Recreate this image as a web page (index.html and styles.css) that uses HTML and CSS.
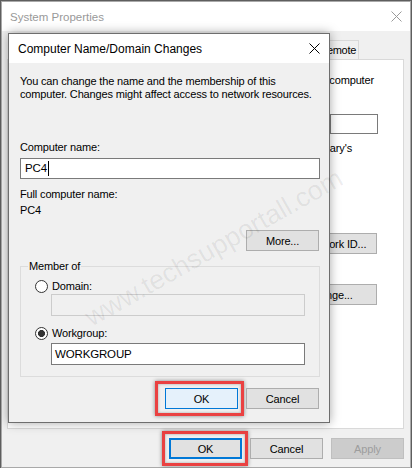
FILE: index.html
```html
<!DOCTYPE html>
<html>
<head>
<meta charset="utf-8">
<link rel="stylesheet" href="styles.css">
</head>
<body>
<div class="desktop">
  <div class="window">
    <div class="titlebar">
      <span class="title inactive">System Properties</span>
      <svg class="close" width="11" height="11" viewBox="0 0 11 11"><path d="M0.5 0.5L10.5 10.5M10.5 0.5L0.5 10.5" stroke="#9a9a9a" stroke-width="1"/></svg>
    </div>
    <div class="win-body">
      <div class="tabs"><div class="tab">Remote</div></div>
      <div class="panel">
        <div class="panel-col">
          <p class="pline one">your computer</p>
          <div class="textbox desc"></div>
          <p class="pline two">"Mary's</p>
          <button class="btn wide netid">Network ID...</button>
          <button class="btn wide change">Change...</button>
        </div>
      </div>
      <div class="btn-row">
        <button class="btn default hl hl-outer">OK</button>
        <button class="btn">Cancel</button>
        <button class="btn disabled">Apply</button>
      </div>
    </div>
  </div>

  <div class="dialog">
    <div class="dtitlebar">
      <span class="title">Computer Name/Domain Changes</span>
      <svg class="close" width="11" height="11" viewBox="0 0 11 11"><path d="M0.5 0.5L10.5 10.5M10.5 0.5L0.5 10.5" stroke="#000" stroke-width="1"/></svg>
    </div>
    <div class="dbody">
      <p class="intro">You can change the name and the membership of this computer. Changes might affect access to network resources.</p>
      <p class="lbl cname">Computer name:</p>
      <div class="textbox cname-box">PC4<span class="caret"></span></div>
      <p class="lbl full">Full computer name:</p>
      <p class="lbl fullval">PC4</p>
      <button class="btn more">More...</button>
      <fieldset class="group">
        <legend>Member of</legend>
        <div class="radio-row first"><span class="radio"></span><span>Domain:</span></div>
        <div class="textbox dis"></div>
        <div class="radio-row second"><span class="radio checked"></span><span>Workgroup:</span></div>
        <div class="textbox wg">WORKGROUP</div>
      </fieldset>
      <div class="dbtn-row">
        <button class="btn focus hl hl-inner">OK</button>
        <button class="btn">Cancel</button>
      </div>
    </div>
  </div>

  <div class="watermark">www.techsupportall.com</div>
</div>
</body>
</html>
```
FILE: styles.css
```css
* { box-sizing: border-box; }
html, body { margin: 0; padding: 0; }
body {
  width: 412px; height: 468px; overflow: hidden;
  background: #5e5e5e;
  font-family: "Liberation Sans", Arial, sans-serif;
  font-size: 11px;
  letter-spacing: -0.15px;
  color: #000;
}
p { margin: 0; }
.desktop { position: relative; width: 412px; height: 468px; }

.window {
  margin: 1px 0 0 1px;
  width: 410px; height: 467px;
  border: 1px solid #a9a9a9;
  background: #f0f0f0;
  display: flex; flex-direction: column;
}
.titlebar {
  height: 29px; background: #fff;
  display: flex; align-items: center; justify-content: space-between;
  padding: 0 8px 0 8px;
}
.title { font-size: 12px; letter-spacing: 0; }
.title.inactive { color: #999; font-size: 11.5px; }
.win-body { flex: 1; padding: 9px 6px 0 5px; display: flex; flex-direction: column; }
.tabs { display: flex; justify-content: flex-end; padding-right: 45px; height: 19px; }
.tab {
  border: 1px solid #d9d9d9; border-bottom: none;
  background: #f0f0f0;
  padding: 0 2px 0 8px; line-height: 18px; font-size: 11px; letter-spacing: -0.3px;
}
.panel {
  height: 370px; background: #fff; border: 1px solid #d9d9d9;
  display: flex;
}
.panel-col {
  margin-left: auto; margin-right: 25px; width: 88px;
  display: flex; flex-direction: column;
}
.pline { line-height: 13px; white-space: nowrap; text-align: right; }
.pline.one { margin-top: 14px; padding-right: 4px; }
.pline.two { margin-top: 8px; padding-right: 26px; }
.textbox {
  border: 1px solid #7a7a7a; background: #fff;
  height: 21px; line-height: 19px; padding-left: 3px; font-size: 11px;
}
.textbox.desc { margin-top: 27px; margin-left: 40px; height: 20px; }

.btn {
  font-family: inherit; font-size: 11px; letter-spacing: -0.15px; color: #000;
  width: 73px; height: 21px; padding: 0;
  background: #e1e1e1; border: 1px solid #adadad;
  position: relative;
}
.btn.wide { width: 83px; align-self: flex-end; margin-right: 1px; }
.btn.netid { margin-top: 78px; }
.btn.change { margin-top: 30px; padding-right: 12px; }
.btn.disabled { background: #cccccc; border-color: #bfbfbf; color: #9d9d9d; }
.btn.default { border: 2px solid #0078d7; }
.btn.focus { background: #e5f1fb; border-color: #0078d7; }

.btn-row { display: flex; justify-content: flex-end; gap: 8px; margin-top: 9px; }

.hl::after {
  content: ""; position: absolute;
  border: 3px solid #ea4141;
  box-shadow: 0 0 4px rgba(0,0,0,0.45), inset 0 0 3px rgba(0,0,0,0.3);
}
.hl-outer::after { top: -9px; left: -9px; right: -8px; bottom: -9px; }
.hl-inner::after { top: -8px; left: -11px; right: -7px; bottom: -8px; }

.dialog {
  position: absolute; left: 8px; top: 32px;
  width: 322px; height: 390px;
  border: 1px solid #6e6e6e;
  background: #f0f0f0;
  box-shadow: 0 0 10px rgba(0,0,0,0.35);
  display: flex; flex-direction: column;
}
.dtitlebar {
  height: 29px; background: #fff;
  display: flex; align-items: center; justify-content: space-between;
  padding: 0 9px 0 9px;
}
.dbody { flex: 1; padding: 12px 9px 0 11px; display: flex; flex-direction: column; }
.intro { line-height: 13px; padding-right: 2px; }
.lbl { line-height: 13px; }
.cname { margin-top: 40px; }
.cname-box { margin-top: 4px; font-size: 11.5px; padding-left: 4px; display: flex; align-items: center; }
.caret { display: inline-block; width: 1px; height: 15px; background: #000; margin-left: 1px; }
.full { margin-top: 7px; line-height: 16px; }
.fullval { line-height: 16px; }
.more { align-self: flex-end; margin-top: 12px; margin-right: 1px; }

.group {
  margin: 9px 0 0 0; padding: 0 14px 11px 14px;
  border: 1px solid #dcdcdc;
  display: flex; flex-direction: column;
  min-width: 0;
}
.group legend { margin-left: -7px; padding: 0 1px; line-height: 13px; }
.radio-row { display: flex; align-items: center; gap: 4px; height: 14px; line-height: 14px; }
.radio-row.first { margin-top: 6px; }
.radio-row.second { margin-top: 10px; }
.radio {
  width: 13px; height: 13px; border-radius: 50%;
  border: 1px solid #333; background: #fff;
}
.radio.checked { background: radial-gradient(circle, #333 0 3.2px, #fff 3.8px); }
.textbox.dis { margin: 1px 0 0 16px; height: 22px; border-color: #cccccc; background: #f0f0f0; }
.textbox.wg { margin: 3px 0 0 16px; height: 22px; line-height: 20px; font-size: 11.5px; }

.dbtn-row { display: flex; justify-content: flex-end; gap: 8px; margin-top: 11px; margin-right: 1px; }

.watermark {
  position: absolute; left: 214px; top: 247px;
  transform: translate(-50%, -50%) rotate(-29.5deg);
  font-size: 27px; color: rgba(0,0,0,0.07);
  white-space: nowrap; pointer-events: none; letter-spacing: 0;
}
```
